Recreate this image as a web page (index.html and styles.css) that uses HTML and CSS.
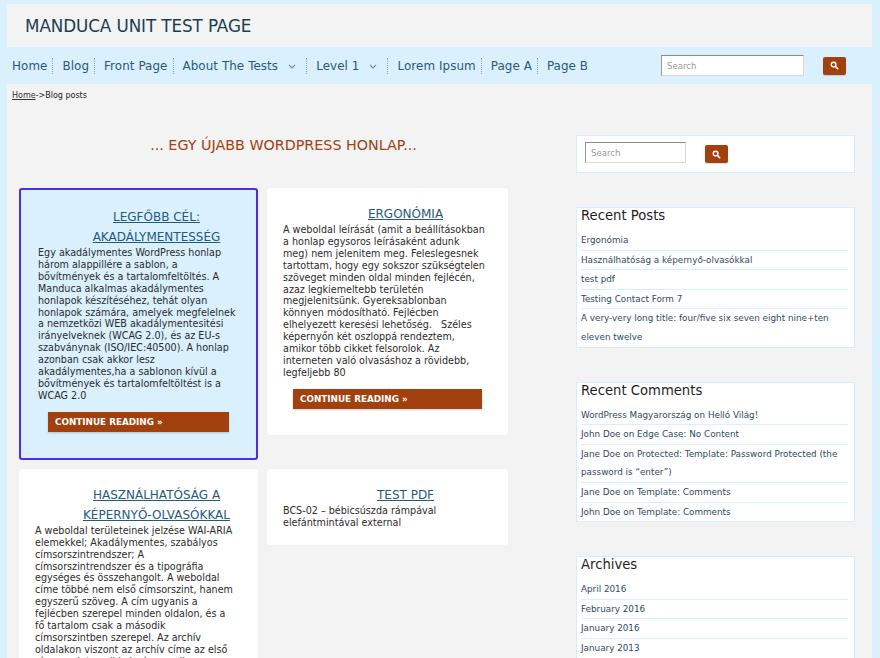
FILE: index.html
```html
<!DOCTYPE html>
<html lang="hu">
<head>
<meta charset="utf-8">
<title>Manduca unit test page</title>
<link rel="stylesheet" href="styles.css">
</head>
<body>
<div class="page">
  <header class="site-header">
    <h1 class="site-title">MANDUCA UNIT TEST PAGE</h1>
  </header>
  <nav class="main-nav">
    <ul class="menu">
      <li><a href="#">Home</a></li>
      <li><a href="#">Blog</a></li>
      <li><a href="#">Front Page</a></li>
      <li><a href="#">About The Tests</a><svg class="chev" viewBox="0 0 8 5" width="8" height="5"><path d="M1 1l3 3 3-3" fill="none" stroke="#7a8e9a" stroke-width="1.1"/></svg></li>
      <li><a href="#">Level 1</a><svg class="chev" viewBox="0 0 8 5" width="8" height="5"><path d="M1 1l3 3 3-3" fill="none" stroke="#7a8e9a" stroke-width="1.1"/></svg></li>
      <li><a href="#">Lorem Ipsum</a></li>
      <li><a href="#">Page A</a></li>
      <li class="last"><a href="#">Page B</a></li>
    </ul>
    <form class="nav-search">
      <input class="search-input wide" type="text" placeholder="Search">
      <button class="search-btn" type="button" aria-label="Search"><svg viewBox="0 0 10 10" width="9" height="9"><circle cx="4" cy="4" r="2.6" fill="none" stroke="#fff" stroke-width="1.6"/><path d="M6 6l2.6 2.6" stroke="#fff" stroke-width="1.8" stroke-linecap="round"/></svg></button>
    </form>
  </nav>
  <div class="content">
    <div class="breadcrumb"><a href="#">Home</a>-&gt;Blog posts</div>
    <div class="columns">
      <main class="main">
        <h2 class="tagline">... EGY ÚJABB WORDPRESS HONLAP...</h2>
        <div class="posts">
          <article class="card focused">
            <h3 class="card-title"><a href="#">LEGFŐBB CÉL: AKADÁLYMENTESSÉG</a></h3>
            <p class="card-text">Egy akadálymentes WordPress honlap három alappillére a sablon, a bővítmények és a tartalomfeltöltés. A Manduca alkalmas akadálymentes honlapok készítéséhez, tehát olyan honlapok számára, amelyek megfelelnek a nemzetközi WEB akadálymentesitési irányelveknek (WCAG 2.0), és az EU-s szabványnak (ISO/IEC:40500). A honlap azonban csak akkor lesz akadálymentes,ha a sablonon kívül a bővítmények és tartalomfeltöltést is a WCAG 2.0</p>
            <a class="more" href="#">CONTINUE READING »</a>
          </article>
          <article class="card">
            <h3 class="card-title"><a href="#">ERGONÓMIA</a></h3>
            <p class="card-text">A weboldal leírását (amit a beállításokban<br>a honlap egysoros leírásaként adunk<br>meg) nem jelenitem meg. Feleslegesnek<br>tartottam, hogy egy sokszor szükségtelen<br>szöveget minden oldal minden fejlécén,<br>azaz legkiemeltebb területén<br>megjelenitsünk. Gyereksablonban<br>könnyen módosítható. Fejlécben<br>elhelyezett keresési lehetőség. &nbsp;&nbsp;Széles<br>képernyőn két oszloppá rendeztem,<br>amikor több cikket felsorolok. Az<br>interneten való olvasáshoz a rövidebb,<br>legfeljebb 80</p>
            <a class="more" href="#">CONTINUE READING »</a>
          </article>
          <article class="card">
            <h3 class="card-title"><a href="#">HASZNÁLHATÓSÁG A KÉPERNYŐ-OLVASÓKKAL</a></h3>
            <p class="card-text">A weboldal területeinek jelzése WAI-ARIA<br>elemekkel; Akadálymentes, szabályos<br>címsorszintrendszer; A<br>címsorszintrendszer és a tipográfia<br>egységes és összehangolt. A weboldal<br>címe többé nem első címsorszint, hanem<br>egyszerű szöveg. A cím ugyanis a<br>fejlécben szerepel minden oldalon, és a<br>fő tartalom csak a második<br>címsorszintben szerepel. Az archív<br>oldalakon viszont az archív címe az első<br>címsorszint, a cikkek címe pedig a<br>második.</p>
            <a class="more" href="#">CONTINUE READING »</a>
          </article>
          <article class="card">
            <h3 class="card-title"><a href="#">TEST PDF</a></h3>
            <p class="card-text">BCS-02 – bébicsúszda rámpával elefántmintával external</p>
          </article>
        </div>
      </main>
      <aside class="sidebar">
        <section class="widget search-widget">
          <input class="search-input" type="text" placeholder="Search">
          <button class="search-btn" type="button" aria-label="Search"><svg viewBox="0 0 10 10" width="9" height="9"><circle cx="4" cy="4" r="2.6" fill="none" stroke="#fff" stroke-width="1.6"/><path d="M6 6l2.6 2.6" stroke="#fff" stroke-width="1.8" stroke-linecap="round"/></svg></button>
        </section>
        <section class="widget">
          <h2 class="widget-title">Recent Posts</h2>
          <ul class="widget-list">
            <li><a href="#">Ergonómia</a></li>
            <li><a href="#">Használhatóság a képernyő-olvasókkal</a></li>
            <li><a href="#">test pdf</a></li>
            <li><a href="#">Testing Contact Form 7</a></li>
            <li><a href="#">A very-very long title: four/five six seven eight nine+ten eleven twelve</a></li>
          </ul>
        </section>
        <section class="widget">
          <h2 class="widget-title">Recent Comments</h2>
          <ul class="widget-list">
            <li><a href="#">WordPress Magyarország</a> on <a href="#">Helló Világ!</a></li>
            <li>John Doe on <a href="#">Edge Case: No Content</a></li>
            <li>Jane Doe on <a href="#">Protected: Template: Password Protected (the password is “enter”)</a></li>
            <li>Jane Doe on <a href="#">Template: Comments</a></li>
            <li>John Doe on <a href="#">Template: Comments</a></li>
          </ul>
        </section>
        <section class="widget">
          <h2 class="widget-title">Archives</h2>
          <ul class="widget-list">
            <li><a href="#">April 2016</a></li>
            <li><a href="#">February 2016</a></li>
            <li><a href="#">January 2016</a></li>
            <li><a href="#">January 2013</a></li>
            <li><a href="#">March 2012</a></li>
          </ul>
        </section>
      </aside>
    </div>
  </div>
</div>
</body>
</html>
```

FILE: styles.css
```css
html, body {
  margin: 0;
  padding: 0;
}
body {
  background: #daf0fd;
  font-family: "DejaVu Sans", Verdana, sans-serif;
  color: #2a2a2a;
}
a {
  color: inherit;
  text-decoration: none;
}
.page {
  margin: 4px 8px 0 7px;
}
.site-header {
  background: #f3f3f3;
  height: 43px;
  display: flex;
  align-items: center;
}
.site-title {
  margin: 0 0 0 18px;
  font-size: 16.8px;
  font-weight: normal;
  color: #1d3c50;
  letter-spacing: -0.1px;
}
.main-nav {
  height: 37px;
  display: flex;
  align-items: center;
  justify-content: space-between;
}
.menu {
  list-style: none;
  margin: 0;
  padding: 0;
  display: flex;
  align-items: center;
}
.menu li {
  display: flex;
  align-items: center;
  padding: 0 5px;
  margin-right: 4px;
  height: 16px;
  border-right: 1px dotted #8fa6b4;
  font-size: 11.9px;
  letter-spacing: 0.08px;
  color: #2a5878;
}
.menu li.last {
  border-right: none;
}
.menu .chev {
  margin: 1px 5px 0 10px;
}
.nav-search {
  display: flex;
  align-items: center;
  margin-right: 26px;
}
.search-input {
  box-sizing: border-box;
  width: 101px;
  height: 21px;
  border: 1px solid #d8d8d8;
  border-top-color: #8a8a8a;
  border-left-color: #9a9a9a;
  background: #fff;
  padding: 0 5px;
  font-family: "DejaVu Sans", sans-serif;
  font-size: 8.6px;
  color: #333;
}
.search-input::placeholder {
  color: #9a9a9a;
}
.search-input.wide {
  width: 143px;
}
.search-btn {
  box-sizing: border-box;
  width: 23px;
  height: 18px;
  margin-left: 19px;
  border: none;
  border-radius: 2px;
  background: #a2410e;
  padding: 0;
  display: flex;
  align-items: center;
  justify-content: center;
  box-shadow: 0 1px 1px rgba(0,0,0,0.15);
}
.content {
  background: #f3f3f3;
  min-height: 700px;
}
.breadcrumb {
  padding: 6px 0 0 5px;
  font-size: 8px;
  line-height: 12px;
  color: #222;
}
.breadcrumb a {
  text-decoration: underline;
  color: #333;
}
.columns {
  display: flex;
  justify-content: space-between;
  align-items: flex-start;
  padding: 33px 17px 0 12px;
}
.main {
  width: 489px;
}
.tagline {
  margin: 1px 0 34px;
  padding-left: 40px;
  text-align: center;
  font-size: 14.3px;
  line-height: 18px;
  font-weight: normal;
  color: #a0410e;
}
.posts {
  display: grid;
  grid-template-columns: 239px 241px;
  column-gap: 9px;
  row-gap: 9px;
  align-items: start;
}
.card {
  background: #fff;
  border-radius: 3px;
  padding: 16px 16px 16px 16px;
  box-shadow: 0 0 1px rgba(0,0,0,0.08);
}
.card.focused {
  background: #daf0fd;
  border: 2px solid #4d2fe3;
  padding: 17px 17px 26px 17px;
}
.card-title {
  margin: 0;
  padding-left: 36px;
  text-align: center;
  font-size: 12px;
  line-height: 20px;
  font-weight: normal;
}
.card-title a {
  color: #245a7c;
  text-decoration: underline;
}
.card-text {
  margin: 0;
  font-size: 9.6px;
  line-height: 11.9px;
  color: #2b2b2b;
}
.more {
  display: block;
  margin: 10px 10px 10px 10px;
  height: 20px;
  line-height: 20px;
  padding-left: 7px;
  background: #a2410e;
  color: #fff;
  font-size: 8.8px;
  font-weight: bold;
  box-shadow: 0 1px 2px rgba(0,0,0,0.2);
}
.card.focused .more {
  margin: 10px 10px 0 10px;
}
.sidebar {
  width: 279px;
}
.widget {
  background: #fff;
  border: 1px solid #d6eefc;
  margin-bottom: 34px;
  padding: 0 6px 0 4px;
}
.search-widget {
  box-sizing: border-box;
  height: 38px;
  display: flex;
  align-items: center;
  padding-left: 8px;
}
.search-widget .search-input {
  margin-top: -3px;
}
.widget-title {
  margin: 0 0 7px;
  font-size: 13.2px;
  line-height: 16px;
  font-weight: normal;
  color: #1e1e1e;
}
.widget-list {
  list-style: none;
  margin: 0;
  padding: 0;
}
.widget-list li {
  font-size: 8.8px;
  line-height: 18.6px;
  border-bottom: 1px solid #d8effc;
  color: #2f4656;
}
.widget-list li:last-child {
  border-bottom: none;
}
.widget-list a {
  color: #2c4a5e;
}
```
